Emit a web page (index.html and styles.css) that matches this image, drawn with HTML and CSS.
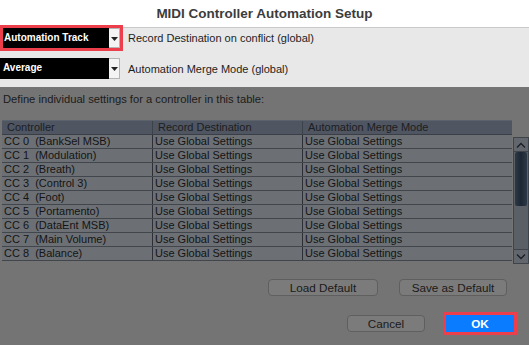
FILE: index.html
```html
<!DOCTYPE html>
<html lang="en">
<head>
    <meta charset="UTF-8">
    <title>MIDI Controller Automation Setup</title>
    <link rel="stylesheet" href="styles.css">
</head>
<body>

<div class="window">
  <div class="titlebar">MIDI Controller Automation Setup</div>

  <div class="globals">
    <div class="global-row first">
      <div class="select marked">
        <span class="select-value">Automation Track</span>
        <span class="select-arrow"><svg width="7" height="4" viewBox="0 0 7 4"><path d="M0 0h7L3.5 4z" fill="#222"/></svg></span>
      </div>
      <span class="global-label">Record Destination on conflict (global)</span>
    </div>
    <div class="global-row second">
      <div class="select">
        <span class="select-value">Average</span>
        <span class="select-arrow"><svg width="7" height="4" viewBox="0 0 7 4"><path d="M0 0h7L3.5 4z" fill="#222"/></svg></span>
      </div>
      <span class="global-label">Automation Merge Mode (global)</span>
    </div>
  </div>

  <div class="dimmed">
    <p class="hint">Define individual settings for a controller in this table:</p>

    <div class="table-wrap">
      <div class="table">
        <div class="row head">
          <div class="cell c1">Controller</div>
          <div class="cell c2">Record Destination</div>
          <div class="cell c3">Automation Merge Mode</div>
        </div>
        <div class="row"><div class="cell c1">CC 0&nbsp; (BankSel MSB)</div><div class="cell c2">Use Global Settings</div><div class="cell c3">Use Global Settings</div></div>
        <div class="row"><div class="cell c1">CC 1&nbsp; (Modulation)</div><div class="cell c2">Use Global Settings</div><div class="cell c3">Use Global Settings</div></div>
        <div class="row"><div class="cell c1">CC 2&nbsp; (Breath)</div><div class="cell c2">Use Global Settings</div><div class="cell c3">Use Global Settings</div></div>
        <div class="row"><div class="cell c1">CC 3&nbsp; (Control 3)</div><div class="cell c2">Use Global Settings</div><div class="cell c3">Use Global Settings</div></div>
        <div class="row"><div class="cell c1">CC 4&nbsp; (Foot)</div><div class="cell c2">Use Global Settings</div><div class="cell c3">Use Global Settings</div></div>
        <div class="row"><div class="cell c1">CC 5&nbsp; (Portamento)</div><div class="cell c2">Use Global Settings</div><div class="cell c3">Use Global Settings</div></div>
        <div class="row"><div class="cell c1">CC 6&nbsp; (DataEnt MSB)</div><div class="cell c2">Use Global Settings</div><div class="cell c3">Use Global Settings</div></div>
        <div class="row"><div class="cell c1">CC 7&nbsp; (Main Volume)</div><div class="cell c2">Use Global Settings</div><div class="cell c3">Use Global Settings</div></div>
        <div class="row"><div class="cell c1">CC 8&nbsp; (Balance)</div><div class="cell c2">Use Global Settings</div><div class="cell c3">Use Global Settings</div></div>
      </div>

      <div class="scrollbar">
        <div class="scroll-btn"><svg width="10" height="6" viewBox="0 0 10 6"><path d="M1 5.5L5 1.5l4 4" fill="none" stroke="#1b1f25" stroke-width="1.3"/></svg></div>
        <div class="scroll-track"><div class="scroll-thumb"></div></div>
        <div class="scroll-btn"><svg width="10" height="6" viewBox="0 0 10 6"><path d="M1 0.5L5 4.5l4-4" fill="none" stroke="#1b1f25" stroke-width="1.3"/></svg></div>
      </div>
    </div>

    <div class="default-buttons">
      <button class="btn load">Load Default</button>
      <button class="btn save">Save as Default</button>
    </div>

    <div class="dialog-buttons">
      <button class="btn cancel">Cancel</button>
      <button class="btn ok">OK</button>
    </div>
  </div>
</div>

</body>
</html>
```

FILE: styles.css
```css
/*RESETS*/

html, body {
    margin: 0;
    padding: 0;
}

body {
    width: 529px;
    height: 345px;
    overflow: hidden;
    font-family: "Liberation Sans", Arial, sans-serif;
}

p {
    margin: 0;
}

button {
    font-family: inherit;
    padding: 0;
    margin: 0;
}

/*WINDOW*/

.window {
    display: flex;
    flex-direction: column;
    height: 345px;
}

.titlebar {
    height: 28px;
    line-height: 27px;
    text-align: center;
    font-size: 13.5px;
    font-weight: bold;
    color: #3c3c3c;
    background-color: #ffffff;
    border-bottom: 1px solid #c9c9c9;
    box-sizing: border-box;
}

/*GLOBAL SETTINGS*/

.globals {
    height: 59px;
    background-color: #e8e8e8;
    display: flex;
    flex-direction: column;
}

.global-row {
    display: flex;
    align-items: center;
}

.global-row.first {
    padding-left: 3px;
    height: 20px;
}

.global-row.second {
    margin-top: 10px;
    height: 21px;
}

.select {
    display: flex;
    height: 100%;
    width: 117px;
}

.global-row.second .select {
    width: 120px;
}

.select.marked {
    outline: 3px solid #ec3f4b;
}

.select-value {
    flex: 1;
    background-color: #000000;
    color: #ffffff;
    font-size: 10px;
    font-weight: bold;
    line-height: 20px;
    padding-left: 1px;
}

.global-row.second .select-value {
    padding-left: 3px;
}

.select-arrow {
    width: 11px;
    background-color: #f4f4f4;
    border: 1px solid #b5b5b5;
    border-left: none;
    box-sizing: border-box;
    display: flex;
    align-items: center;
    justify-content: center;
    padding-top: 1px;
}

.global-label {
    margin-left: 8px;
    font-size: 11px;
    color: #1e1e1e;
}

/*DIMMED AREA*/

.dimmed {
    flex: 1;
    background-color: #747474;
    display: flex;
    flex-direction: column;
}

.hint {
    font-size: 11.2px;
    color: #1b1b1b;
    padding: 6px 0 0 3px;
    height: 27px;
    box-sizing: border-box;
}

.table-wrap {
    display: flex;
    margin-top: 6px;
    padding-left: 2px;
}

.table {
    width: 510px;
    display: flex;
    flex-direction: column;
}

.row {
    display: flex;
    height: 14px;
    background-color: #6c7075;
    border-bottom: 1px solid #41464c;
    box-sizing: border-box;
}

.row.head {
    height: 15px;
    background-color: #4f5561;
    border-top: 1px solid #5c626c;
    border-bottom: 1px solid #3a3f47;
}

.cell {
    font-size: 11px;
    line-height: 13px;
    color: #141414;
    white-space: nowrap;
    overflow: hidden;
    box-sizing: border-box;
    padding-left: 2px;
}

.row.head .cell {
    color: #1c1e22;
    padding-left: 5px;
}

.c1 {
    width: 150px;
}

.c2 {
    width: 150px;
    border-left: 1px solid #2c3036;
}

.c3 {
    flex: 1;
    border-left: 1px solid #2c3036;
}

.row.head .c2, .row.head .c3 {
    border-left: 1px solid #3c414a;
}

/*SCROLLBAR*/

.scrollbar {
    width: 16px;
    margin-left: 1px;
    margin-top: 17px;
    height: 127px;
    display: flex;
    flex-direction: column;
    background-color: #5e636a;
}

.scroll-btn {
    height: 15px;
    display: flex;
    align-items: center;
    justify-content: center;
    background-color: #62676e;
    border: 1px solid #3f444b;
    box-sizing: border-box;
}

.scroll-track {
    flex: 1;
    background-color: #5b6067;
    border-left: 1px solid #3f444b;
    border-right: 1px solid #3f444b;
}

.scroll-thumb {
    height: 54px;
    margin: 0 1px;
    border-radius: 2px;
    background: linear-gradient(to right, #2d3947, #1d2733, #2d3947);
}

/*BUTTONS*/

.btn {
    height: 17px;
    font-size: 11.7px;
    color: #1a1a1a;
    background-color: #7b7b7b;
    border: 1px solid #5f5f5f;
    border-radius: 4px;
    box-sizing: border-box;
}

.default-buttons {
    display: flex;
    justify-content: flex-end;
    gap: 21px;
    margin-top: 15px;
    padding-right: 22px;
}

.btn.load {
    width: 110px;
}

.btn.save {
    width: 108px;
}

.dialog-buttons {
    display: flex;
    justify-content: flex-end;
    align-items: center;
    gap: 21px;
    margin-top: 19px;
    padding-right: 15px;
}

.btn.cancel {
    width: 78px;
}

.btn.ok {
    width: 68px;
    height: 17px;
    background-color: #0a7cff;
    border: none;
    border-radius: 0;
    color: #ffffff;
    font-weight: bold;
    outline: 3px solid #ec3f4b;
}
```
